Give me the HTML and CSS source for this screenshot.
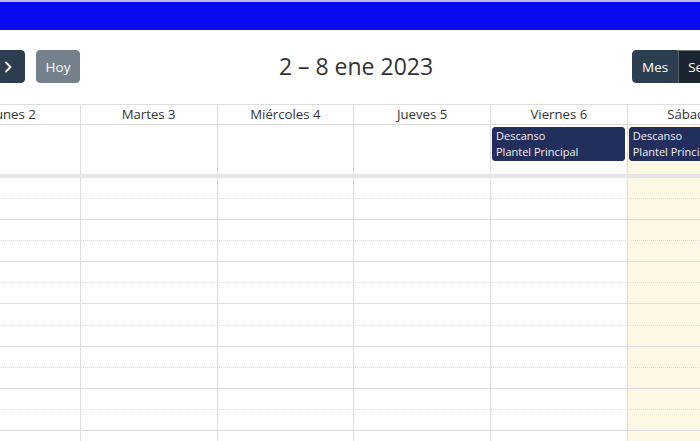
FILE: index.html
```html
<!DOCTYPE html>
<html lang="es">
<head>
<meta charset="utf-8">
<title>Calendario</title>
<link rel="stylesheet" href="styles.css">
</head>
<body>
<div class="topbar"></div>
<div class="fc">
  <div class="toolbar">
    <div class="chunk left">
      <div class="btn-group">
        <button class="btn icon-btn"><svg width="10" height="12" viewBox="0 0 10 12"><path d="M3 1.5 L7.5 6 L3 10.5" fill="none" stroke="#fff" stroke-width="1.8" stroke-linecap="round" stroke-linejoin="round" transform="translate(10,0) scale(-1,1)"/></svg></button>
        <button class="btn icon-btn"><svg width="10" height="12" viewBox="0 0 10 12"><path d="M3 1.5 L7.5 6 L3 10.5" fill="none" stroke="#fff" stroke-width="1.8" stroke-linecap="round" stroke-linejoin="round"/></svg></button>
      </div>
      <button class="btn today" disabled>Hoy</button>
    </div>
    <h2 class="title">2 – 8 ene 2023</h2>
    <div class="chunk right">
      <div class="btn-group">
        <button class="btn">Mes</button>
        <button class="btn active">Semana</button>
        <button class="btn">Día</button>
      </div>
    </div>
  </div>

  <div class="row head">
    <div class="cell axis"></div>
    <div class="cell">Lunes 2</div>
    <div class="cell">Martes 3</div>
    <div class="cell">Miércoles 4</div>
    <div class="cell">Jueves 5</div>
    <div class="cell">Viernes 6</div>
    <div class="cell">Sábado 7</div>
    <div class="cell">Domingo 8</div>
  </div>

  <div class="row allday">
    <div class="cell axis"></div>
    <div class="cell"></div>
    <div class="cell"></div>
    <div class="cell"></div>
    <div class="cell"></div>
    <div class="cell"><div class="event">Descanso<br>Plantel Principal</div></div>
    <div class="cell today-col"><div class="event">Descanso<br>Plantel Principal</div></div>
    <div class="cell"><div class="event">Descanso<br>Plantel Principal</div></div>
  </div>

  <div class="divider"></div>

  <div class="timegrid">
    <div class="cols">
      <div class="col axis"></div>
      <div class="col"></div>
      <div class="col"></div>
      <div class="col"></div>
      <div class="col"></div>
      <div class="col"></div>
      <div class="col today-col"></div>
      <div class="col"></div>
    </div>
    <div class="slats">
      <div class="slot"></div><div class="slot minor"></div>
      <div class="slot"></div><div class="slot minor"></div>
      <div class="slot"></div><div class="slot minor"></div>
      <div class="slot"></div><div class="slot minor"></div>
      <div class="slot"></div><div class="slot minor"></div>
      <div class="slot"></div><div class="slot minor"></div>
      <div class="slot"></div><div class="slot minor"></div>
    </div>
  </div>
</div>
</body>
</html>
```

FILE: styles.css
```css
html, body {
  margin: 0;
  padding: 0;
  background: #fff;
  overflow: hidden;
  width: 700px;
  height: 441px;
}

body {
  font-family: "Open Sans", "Liberation Sans", sans-serif;
  color: #333;
}

.topbar {
  height: 28px;
  border-top: 2px solid #b9b9ef;
  background: #0a0af0;
}

.fc {
  --cols: 63px repeat(7, 136.75px);
  margin-left: -120px;
  width: 1020px;
}

/* toolbar */
.toolbar {
  display: flex;
  align-items: center;
  margin-top: 20px;
  padding-left: 75px;
  height: 33px;
}

.chunk {
  display: flex;
  align-items: center;
}

.title {
  flex: 0 0 552px;
  margin: 0;
  text-align: center;
  font-size: 23px;
  font-weight: 400;
  color: #333;
  line-height: 33px;
}

.btn-group {
  display: flex;
}

.btn {
  height: 33px;
  padding: 0 9px;
  border: 1px solid #2c3e50;
  background: #2c3e50;
  color: #fff;
  font-family: "Open Sans", "Liberation Sans", sans-serif;
  font-size: 13.5px;
  border-radius: 0;
  display: flex;
  align-items: center;
  justify-content: center;
  cursor: pointer;
}

.btn-group .btn:first-child {
  border-radius: 4px 0 0 4px;
}

.btn-group .btn:last-child {
  border-radius: 0 4px 4px 0;
}

.icon-btn {
  width: 35px;
  padding: 0;
}

.today {
  margin-left: 11px;
  width: 44px;
  border-radius: 4px;
  opacity: 0.65;
  cursor: default;
}

.btn.active {
  background: #1a252f;
  border-color: #1a252f;
  border-top-color: #6b737b;
  border-left-color: #56606a;
}

/* grid rows */
.row {
  display: grid;
  grid-template-columns: var(--cols);
}

.head {
  margin-top: 21px;
  border-top: 1px solid #ddd;
  border-bottom: 1px solid #ddd;
  height: 21px;
  box-sizing: border-box;
}

.head .cell {
  border-left: 1px solid #ddd;
  text-align: center;
  font-size: 13.2px;
  line-height: 19px;
  color: #333;
}

.cell.axis,
.col.axis {
  border-left: none;
}

.allday {
  height: 49px;
}

.allday .cell {
  border-left: 1px solid #ddd;
  padding-top: 2px;
  box-sizing: border-box;
}

.today-col {
  background: #fcf8e3;
}

.event {
  margin: 0 2px 0 1px;
  background: #222e5c;
  border: 1px solid #222e5c;
  border-radius: 3px;
  color: #f2f2f2;
  font-size: 11px;
  line-height: 16px;
  padding: 0 3px;
  white-space: nowrap;
  overflow: hidden;
}

.divider {
  height: 3.7px;
  background: #e6e6e6;
}

/* time grid */
.timegrid {
  display: grid;
}

.cols,
.slats {
  grid-area: 1 / 1;
}

.cols {
  display: grid;
  grid-template-columns: var(--cols);
}

.col {
  border-left: 1px solid #ddd;
}

.slats {
  position: relative;
  z-index: 1;
}

.slot {
  height: 21.13px;
  box-sizing: border-box;
  border-bottom: 1px dotted #ddd;
}

.slot.minor {
  border-bottom: 1px solid #ddd;
}
```
